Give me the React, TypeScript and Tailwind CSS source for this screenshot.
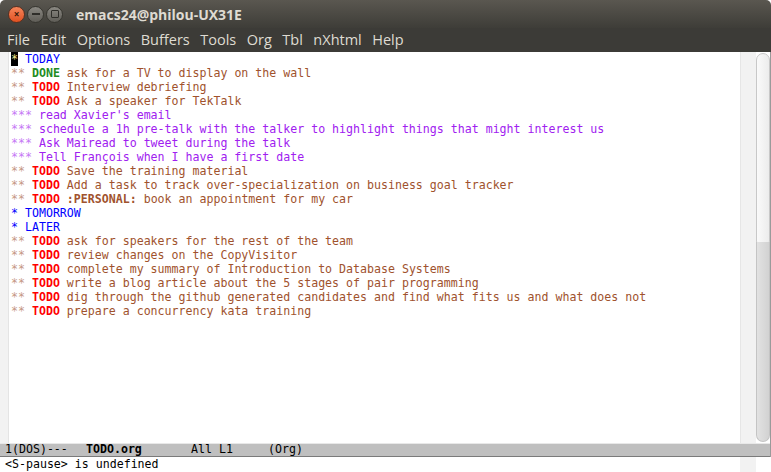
import React from "react";

type Seg = { t: string; c: string; b?: boolean; cursor?: boolean; dim?: boolean };

const BLUE = "text-[#0000ff]";
const SIENNA = "text-[#a0522d]";
const PURPLE = "text-[#a020f0]";
const RED = "text-[#ff0000]";
const GREEN = "text-[#228b22]";

const l2 = (kw: "TODO" | "DONE", rest: string, tag?: string): Seg[] => {
  const s: Seg[] = [
    { t: "**", c: SIENNA, dim: true },
    { t: " ", c: SIENNA },
    { t: kw, c: kw === "TODO" ? RED : GREEN, b: true },
    { t: " ", c: SIENNA },
  ];
  if (tag) s.push({ t: tag, c: SIENNA, b: true }, { t: " ", c: SIENNA });
  s.push({ t: rest, c: SIENNA });
  return s;
};
const l3 = (rest: string): Seg[] => [
  { t: "***", c: PURPLE, dim: true },
  { t: " " + rest, c: PURPLE },
];
const l1 = (rest: string): Seg[] => [
  { t: "*", c: BLUE },
  { t: " " + rest, c: BLUE },
];

const lines: Seg[][] = [
  [
    { t: "*", c: "text-[#f0e68c]", cursor: true },
    { t: " TODAY", c: BLUE },
  ],
  l2("DONE", "ask for a TV to display on the wall"),
  l2("TODO", "Interview debriefing"),
  l2("TODO", "Ask a speaker for TekTalk"),
  l3("read Xavier's email"),
  l3("schedule a 1h pre-talk with the talker to highlight things that might interest us"),
  l3("Ask Mairead to tweet during the talk"),
  l3("Tell François when I have a first date"),
  l2("TODO", "Save the training material"),
  l2("TODO", "Add a task to track over-specialization on business goal tracker"),
  l2("TODO", "book an appointment for my car", ":PERSONAL:"),
  l1("TOMORROW"),
  l1("LATER"),
  l2("TODO", "ask for speakers for the rest of the team"),
  l2("TODO", "review changes on the CopyVisitor"),
  l2("TODO", "complete my summary of Introduction to Database Systems"),
  l2("TODO", "write a blog article about the 5 stages of pair programming"),
  l2("TODO", "dig through the github generated candidates and find what fits us and what does not"),
  l2("TODO", "prepare a concurrency kata training"),
];

const menu = ["File", "Edit", "Options", "Buffers", "Tools", "Org", "Tbl", "nXhtml", "Help"];

export default function App() {
  return (
    <div className="w-[771px] h-[472px] overflow-hidden flex flex-col bg-white">
      {/* title bar */}
      <div className="h-[28px] shrink-0 rounded-t-[5px] bg-gradient-to-b from-[#5a5750] to-[#3e3d38] flex items-center pl-[8px] font-['Open_Sans',sans-serif]">
        <div className="flex items-center gap-[2px]">
          <div className="w-[17px] h-[17px] rounded-full bg-gradient-to-b from-[#f5855a] to-[#e0501f] border border-[#5a3020] flex items-center justify-center text-[#3a1a0a] text-[10px] font-bold leading-none">
            ×
          </div>
          <div className="w-[17px] h-[17px] rounded-full bg-gradient-to-b from-[#8a8882] to-[#5f5d57] border border-[#36352f] flex items-center justify-center">
            <div className="w-[8px] h-[2px] bg-[#2f2e2a]" />
          </div>
          <div className="w-[17px] h-[17px] rounded-full bg-gradient-to-b from-[#8a8882] to-[#5f5d57] border border-[#36352f] flex items-center justify-center">
            <div className="w-[8px] h-[8px] border-[1.5px] border-[#2f2e2a] rounded-[1px]" />
          </div>
        </div>
        <div className="ml-[13px] text-[#dfdbd2] font-bold text-[14px]">emacs24@philou-UX31E</div>
      </div>
      {/* menu bar */}
      <div className="h-[24px] shrink-0 bg-[#3c3b37] flex items-center pl-[7px] gap-[10.5px] text-[#dfdbd2] text-[14.5px] font-['Open_Sans',sans-serif]">
        {menu.map((m) => (
          <span key={m}>{m}</span>
        ))}
      </div>
      {/* editor */}
      <div className="flex-1 flex min-h-0">
        <div className="w-[9px] shrink-0 bg-[#f2f2f2] border-r border-[#e4e4e4]" />
        <div className="flex-1 pl-[2px] font-['DejaVu_Sans_Mono',monospace] text-[11.6px] leading-[14px] whitespace-pre">
          {lines.map((ln, i) => (
            <div key={i} className="h-[14px]">
              {ln.map((s, j) => (
                <span
                  key={j}
                  className={`${s.c} ${s.b ? "font-bold" : ""} ${s.cursor ? "bg-black" : ""} ${s.dim ? "opacity-60" : ""}`}
                >
                  {s.t}
                </span>
              ))}
            </div>
          ))}
        </div>
        <div className="w-[31px] shrink-0 flex">
          <div className="w-[16px] bg-[#f2f2f2] border-l border-[#e6e6e6]" />
          <div className="w-[14px] flex flex-col pt-[1px] pb-[1px]">
            <div className="h-[195px] rounded-t-[7px] rounded-b-[7px] border border-[#c8c8c8] bg-gradient-to-r from-[#fafafa] to-[#ececec]" />
            <div className="flex-1 -mt-[6px] rounded-b-[7px] border border-[#c4c4c4] border-t-0 bg-gradient-to-r from-[#e2e2e2] to-[#d2d2d2]" />
          </div>
          <div className="w-[1px] bg-[#9a9a9a]" />
        </div>
      </div>
      {/* mode line */}
      <div className="h-[14px] shrink-0 flex">
        <div className="w-[770px] bg-[#bfbfbf] border-t border-[#e8e8e8] border-b border-b-[#7a7a7a] flex items-center font-['DejaVu_Sans_Mono',monospace] text-[11.6px] text-black whitespace-pre leading-none">
          <span className="w-[86px] pl-[5px]">1(DOS)---</span>
          <span className="w-[105px] font-bold">TODO.org</span>
          <span className="w-[77px]">All L1</span>
          <span>(Org)</span>
        </div>
        <div className="w-[1px] bg-[#9a9a9a]" />
      </div>
      {/* minibuffer */}
      <div className="h-[15px] shrink-0 flex">
        <div className="flex-1 pl-[5px] font-['DejaVu_Sans_Mono',monospace] text-[11.6px] leading-[15px] text-black whitespace-pre">
          {"<S-pause> is undefined"}
        </div>
        <div className="w-[16px] bg-[#f2f2f2] mr-[15px]" />
      </div>
    </div>
  );
}
